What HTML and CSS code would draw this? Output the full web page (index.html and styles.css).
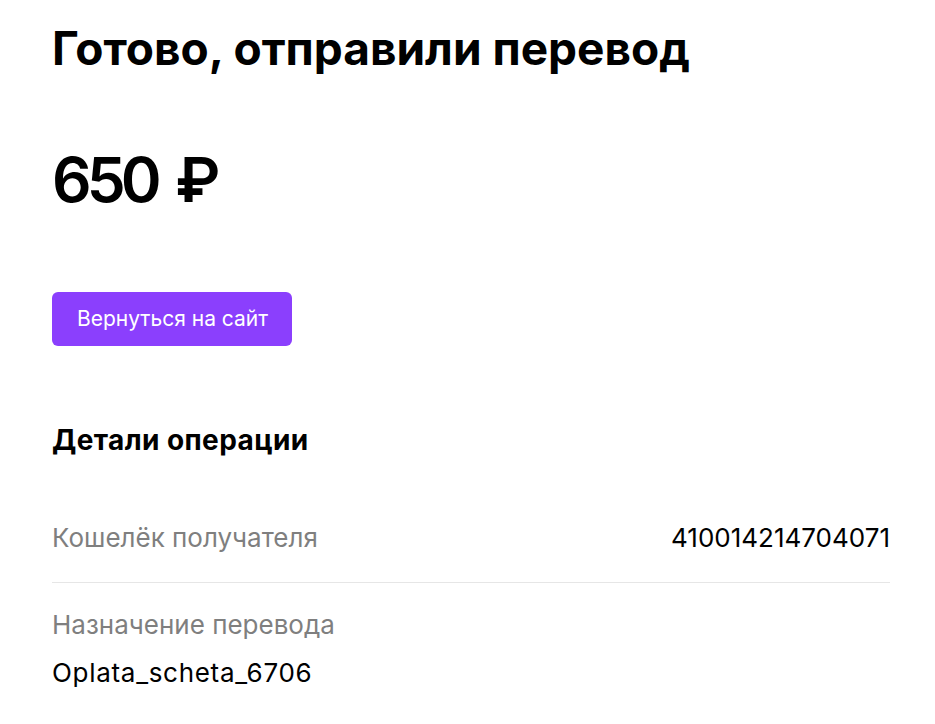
FILE: index.html
```html
<!DOCTYPE html>
<html lang="ru">
<head>
<meta charset="UTF-8" />
<meta name="viewport" content="width=device-width, initial-scale=1" />
<title>Готово, отправили перевод</title>
<link rel="stylesheet" href="styles.css">
</head>
<body>

<main class="page">
  <h1 class="title">Готово, отправили перевод</h1>

  <div class="amount"><span class="amount-num">650</span> ₽</div>

  <a class="back-btn" href="#">Вернуться на сайт</a>

  <section class="details">
    <h2 class="details-title">Детали операции</h2>

    <div class="row row-inline">
      <span class="label">Кошелёк получателя</span>
      <span class="value">410014214704071</span>
    </div>

    <div class="row">
      <div class="label">Назначение перевода</div>
      <div class="value purpose">Oplata_scheta_6706</div>
    </div>
  </section>
</main>

</body>
</html>
```

FILE: styles.css
```css
body {
  margin: 0;
  font-family: Inter, "Noto Sans", sans-serif;
  color: #000;
  background: #fff;
}
.page {
  padding: 16px 45px 0 52px;
}
.title {
  margin: 0;
  font-size: 46px;
  font-weight: 700;
  line-height: 64px;
}
.amount {
  margin-top: 60px;
  font-size: 62px;
  font-weight: 600;
  line-height: 80px;
}
.amount-num {
  letter-spacing: -5px;
  margin-right: 3px;
}
.back-btn {
  display: inline-block;
  margin-top: 72px;
  padding: 0 24px 0 25px;
  height: 54px;
  line-height: 54px;
  background: #8b3ffd;
  color: #fff;
  border-radius: 6px;
  font-size: 21px;
  text-decoration: none;
}
.details {
  margin-top: 76px;
}
.details-title {
  margin: 0 0 48px;
  font-size: 28px;
  font-weight: 700;
  line-height: 36px;
  letter-spacing: 0.4px;
}
.row {
  padding: 16px 0;
  font-size: 26px;
  line-height: 32px;
}
.row-inline {
  display: flex;
  justify-content: space-between;
  border-bottom: 1px solid #e6e6e6;
  padding-bottom: 28px;
}
.label {
  color: #7f7f7f;
}
.row .value {
  color: #000;
}
.row + .row {
  padding-top: 26px;
}
.row:not(.row-inline) .value {
  margin-top: 16px;
}
.purpose {
  letter-spacing: 0.7px;
}
```
